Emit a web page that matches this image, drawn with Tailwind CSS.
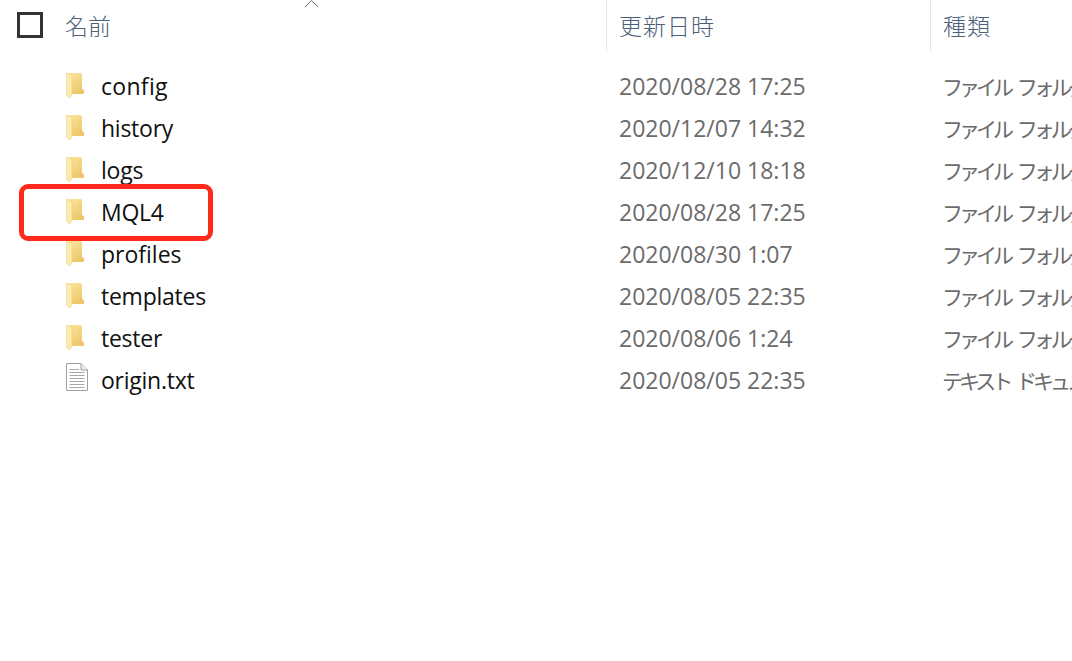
<!DOCTYPE html>
<html><head><meta charset="utf-8">
<script src="https://cdn.jsdelivr.net/npm/@tailwindcss/browser@4"></script>
</head>
<body class="bg-white overflow-hidden">
<svg class="absolute w-0 h-0"><defs><linearGradient id="fb" x1="0" y1="0" x2="0.6" y2="1"><stop offset="0" stop-color="#fbe6a0"/><stop offset="1" stop-color="#edc768"/></linearGradient></defs></svg>
<div class="relative w-[1072px] h-[661px] overflow-hidden bg-white font-['Open_Sans','Noto_Sans_CJK_JP',sans-serif] text-[23px] leading-[42px]">
  <svg class="absolute left-[304px] top-0 w-[16px] h-[8px]" viewBox="0 0 16 8" fill="none" stroke="#6b6b6b" stroke-width="1"><path d="M1 7 L7.5 .5 L14 7"/></svg>
  <div class="flex h-[51px] text-[#4c607a] font-['Noto_Sans_CJK_JP',sans-serif] text-[23px] font-light">
    <div class="w-[606px] shrink-0 flex items-center pb-[1px]">
      <div class="ml-[17px] w-[26px] h-[26px] border-[3px] border-[#333333]"></div>
      <span class="ml-[22px] pb-[1px]">名前</span>
    </div>
    <div class="w-[324px] shrink-0 flex items-center border-l border-[#e5e5e5] pl-[12px] pb-[2px] tracking-[1px]">更新日時</div>
    <div class="flex-1 flex items-center border-l border-[#e5e5e5] pl-[12px] pb-[2px] tracking-[1px]">種類</div>
  </div>
  <div class="pt-[14px]">
    <div class="flex h-[42px]"><div class="w-[101px] shrink-0 flex items-center"><svg class="ml-[66px] mb-[1px] w-[19px] h-[27px]" viewBox="0 0 19 27"><path d="M3 1 H15 L16 3 V17 L18 18 V22 H3 Z" fill="url(#fb)"/><path d="M0 1 L6 3 V22 L4 26 L0 23 Z" fill="#fcebb0" stroke="#e8c970" stroke-width=".5"/></svg></div><div class="w-[518px] shrink-0 text-[#111111] tracking-[0.3px]">config</div><div class="w-[324px] shrink-0 text-[#6b6b6b]">2020/08/28 17:25</div><div class="-ml-[1px] whitespace-nowrap text-[#6b6b6b] text-[21px] tracking-[-4px] [word-spacing:6px] font-['Noto_Sans_CJK_JP',sans-serif] font-normal">ファイル フォルダー</div></div>
    <div class="flex h-[42px]"><div class="w-[101px] shrink-0 flex items-center"><svg class="ml-[66px] mb-[1px] w-[19px] h-[27px]" viewBox="0 0 19 27"><path d="M3 1 H15 L16 3 V17 L18 18 V22 H3 Z" fill="url(#fb)"/><path d="M0 1 L6 3 V22 L4 26 L0 23 Z" fill="#fcebb0" stroke="#e8c970" stroke-width=".5"/></svg></div><div class="w-[518px] shrink-0 text-[#111111] tracking-[-0.25px]">history</div><div class="w-[324px] shrink-0 text-[#6b6b6b]">2020/12/07 14:32</div><div class="-ml-[1px] whitespace-nowrap text-[#6b6b6b] text-[21px] tracking-[-4px] [word-spacing:6px] font-['Noto_Sans_CJK_JP',sans-serif] font-normal">ファイル フォルダー</div></div>
    <div class="flex h-[42px]"><div class="w-[101px] shrink-0 flex items-center"><svg class="ml-[66px] mb-[1px] w-[19px] h-[27px]" viewBox="0 0 19 27"><path d="M3 1 H15 L16 3 V17 L18 18 V22 H3 Z" fill="url(#fb)"/><path d="M0 1 L6 3 V22 L4 26 L0 23 Z" fill="#fcebb0" stroke="#e8c970" stroke-width=".5"/></svg></div><div class="w-[518px] shrink-0 text-[#111111] tracking-[-0.25px]">logs</div><div class="w-[324px] shrink-0 text-[#6b6b6b]">2020/12/10 18:18</div><div class="-ml-[1px] whitespace-nowrap text-[#6b6b6b] text-[21px] tracking-[-4px] [word-spacing:6px] font-['Noto_Sans_CJK_JP',sans-serif] font-normal">ファイル フォルダー</div></div>
    <div class="flex h-[42px]"><div class="w-[101px] shrink-0 flex items-center"><svg class="ml-[66px] mb-[1px] w-[19px] h-[27px]" viewBox="0 0 19 27"><path d="M3 1 H15 L16 3 V17 L18 18 V22 H3 Z" fill="url(#fb)"/><path d="M0 1 L6 3 V22 L4 26 L0 23 Z" fill="#fcebb0" stroke="#e8c970" stroke-width=".5"/></svg></div><div class="w-[518px] shrink-0 text-[#111111] tracking-[-0.25px]">MQL4</div><div class="w-[324px] shrink-0 text-[#6b6b6b]">2020/08/28 17:25</div><div class="-ml-[1px] whitespace-nowrap text-[#6b6b6b] text-[21px] tracking-[-4px] [word-spacing:6px] font-['Noto_Sans_CJK_JP',sans-serif] font-normal">ファイル フォルダー</div></div>
    <div class="flex h-[42px]"><div class="w-[101px] shrink-0 flex items-center"><svg class="ml-[66px] mb-[1px] w-[19px] h-[27px]" viewBox="0 0 19 27"><path d="M3 1 H15 L16 3 V17 L18 18 V22 H3 Z" fill="url(#fb)"/><path d="M0 1 L6 3 V22 L4 26 L0 23 Z" fill="#fcebb0" stroke="#e8c970" stroke-width=".5"/></svg></div><div class="w-[518px] shrink-0 text-[#111111]">profiles</div><div class="w-[324px] shrink-0 text-[#6b6b6b]">2020/08/30 1:07</div><div class="-ml-[1px] whitespace-nowrap text-[#6b6b6b] text-[21px] tracking-[-4px] [word-spacing:6px] font-['Noto_Sans_CJK_JP',sans-serif] font-normal">ファイル フォルダー</div></div>
    <div class="flex h-[42px]"><div class="w-[101px] shrink-0 flex items-center"><svg class="ml-[66px] mb-[1px] w-[19px] h-[27px]" viewBox="0 0 19 27"><path d="M3 1 H15 L16 3 V17 L18 18 V22 H3 Z" fill="url(#fb)"/><path d="M0 1 L6 3 V22 L4 26 L0 23 Z" fill="#fcebb0" stroke="#e8c970" stroke-width=".5"/></svg></div><div class="w-[518px] shrink-0 text-[#111111] tracking-[-0.25px]">templates</div><div class="w-[324px] shrink-0 text-[#6b6b6b]">2020/08/05 22:35</div><div class="-ml-[1px] whitespace-nowrap text-[#6b6b6b] text-[21px] tracking-[-4px] [word-spacing:6px] font-['Noto_Sans_CJK_JP',sans-serif] font-normal">ファイル フォルダー</div></div>
    <div class="flex h-[42px]"><div class="w-[101px] shrink-0 flex items-center"><svg class="ml-[66px] mb-[1px] w-[19px] h-[27px]" viewBox="0 0 19 27"><path d="M3 1 H15 L16 3 V17 L18 18 V22 H3 Z" fill="url(#fb)"/><path d="M0 1 L6 3 V22 L4 26 L0 23 Z" fill="#fcebb0" stroke="#e8c970" stroke-width=".5"/></svg></div><div class="w-[518px] shrink-0 text-[#111111] tracking-[-0.25px]">tester</div><div class="w-[324px] shrink-0 text-[#6b6b6b]">2020/08/06 1:24</div><div class="-ml-[1px] whitespace-nowrap text-[#6b6b6b] text-[21px] tracking-[-4px] [word-spacing:6px] font-['Noto_Sans_CJK_JP',sans-serif] font-normal">ファイル フォルダー</div></div>
    <div class="flex h-[42px]"><div class="w-[101px] shrink-0 flex items-center"><svg class="ml-[66px] mb-[6px] w-[22px] h-[28px]" viewBox="0 0 22 28" fill="none"><path d="M.5 .5 H15 L21.5 7 V27.5 H.5 Z" fill="#fff" stroke="#a0a0a0"/><path d="M15 .5 V7 H21.5" fill="#eee" stroke="#a0a0a0"/><path d="M3.5 6.5 H13 M3.5 9.5 H18.5 M3.5 12.5 H18.5 M3.5 15.5 H18.5 M3.5 18.5 H18.5 M3.5 21.5 H18.5 M3.5 24.5 H18.5" stroke="#a8a8a8"/></svg></div><div class="w-[518px] shrink-0 text-[#111111] tracking-[-0.25px]">origin.txt</div><div class="w-[324px] shrink-0 text-[#6b6b6b]">2020/08/05 22:35</div><div class="-ml-[1px] whitespace-nowrap text-[#6b6b6b] text-[21px] tracking-[-4px] [word-spacing:6px] font-['Noto_Sans_CJK_JP',sans-serif] font-normal">テキスト ドキュメント</div></div>
  </div>
  <div class="absolute left-[19px] top-[184px] w-[194px] h-[57px] border-[5px] border-[#ff2a1c] rounded-[9px]"></div>
</div>
</body></html>
